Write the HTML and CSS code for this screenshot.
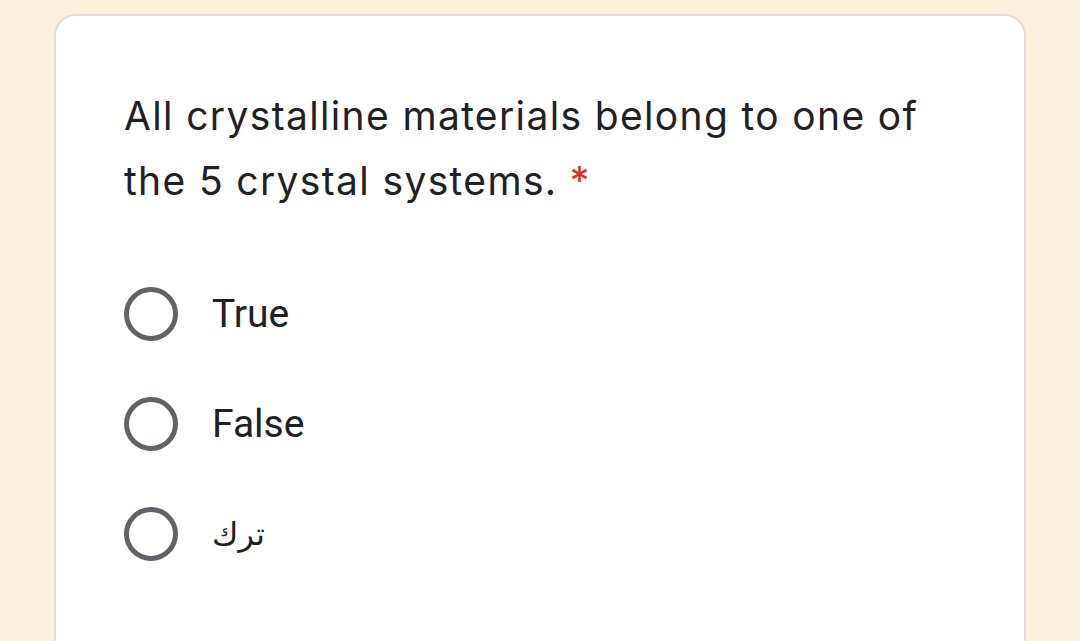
FILE: index.html
```html
<!DOCTYPE html>
<html>
<head>
<meta charset="utf-8">
<link rel="stylesheet" href="styles.css">
</head>
<body>
<div class="card">
  <div class="question">All crystalline materials belong to one of the 5 crystal systems. <span class="req">*</span></div>
  <div class="options">
    <div class="option"><span class="radio"></span><span class="label">True</span></div>
    <div class="option"><span class="radio"></span><span class="label">False</span></div>
    <div class="option"><span class="radio"></span><span class="label ar" dir="rtl">ترك</span></div>
  </div>
</div>
</body>
</html>
```
FILE: styles.css
```css
html, body {
  margin: 0;
  padding: 0;
}
body {
  background: #fbf0db;
  width: 1080px;
  height: 641px;
  overflow: hidden;
  font-family: Roboto, "Liberation Sans", sans-serif;
  color: #202124;
}
.card {
  margin: 14px 0 0 54px;
  width: 972px;
  height: 700px;
  background: #ffffff;
  border: 2px solid #e2ddd6;
  border-radius: 22px;
  padding: 67px 0 0 68px;
  box-sizing: border-box;
}
.question {
  font-family: Inter, Roboto, sans-serif;
  font-size: 39px;
  line-height: 65px;
  width: 810px;
  letter-spacing: 1.35px;
}
.req {
  color: #d93025;
  letter-spacing: 0;
}
.options {
  margin-top: 46px;
  display: flex;
  flex-direction: column;
}
.option {
  height: 110px;
  display: flex;
  align-items: center;
}
.radio {
  width: 44px;
  height: 44px;
  border: 5px solid #5f6368;
  border-radius: 50%;
  flex-shrink: 0;
}
.label {
  margin-left: 34px;
  font-size: 39px;
}
.ar {
  font-family: "DejaVu Sans", sans-serif;
  font-size: 32px;
}
```
